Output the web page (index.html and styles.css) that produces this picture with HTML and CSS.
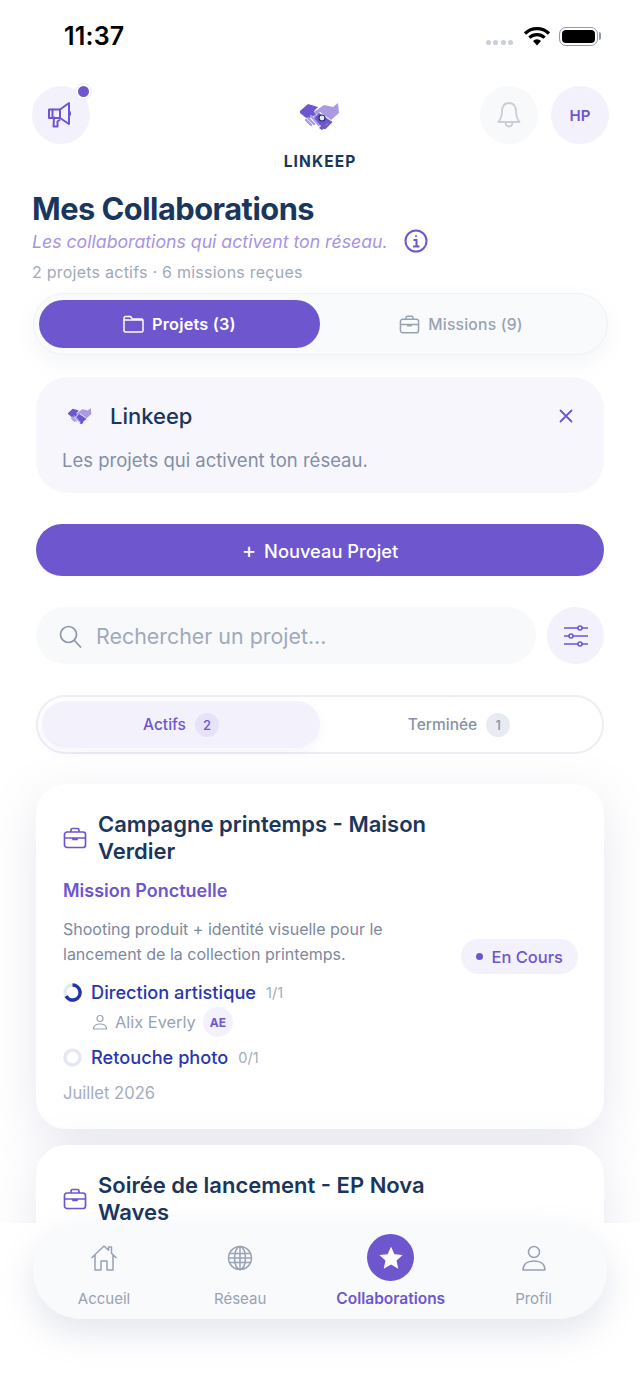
FILE: index.html
```html
<!DOCTYPE html>
<html>
<head>
    <link rel="stylesheet" href="styles.css">
</head>
<body>
<div class="screen">
    <div class="status-bar">
        <span class="time">11:37</span>
        <div class="status-icons">
            <span class="dots"><i></i><i></i><i></i><i></i></span>
            <svg width="26" height="20" viewBox="0 0 26 20"><path d="M1 7.500a17 17 0 0 1 24 0" fill="none" stroke="#000" stroke-width="3.200"/><path d="M5.400 11.600a11 11 0 0 1 15.200 0" fill="none" stroke="#000" stroke-width="3.200"/><path d="M9 15a5.600 5.600 0 0 1 8 0l-4 4.400z" fill="#000"/></svg>
            <span class="battery"><b></b></span>
        </div>
    </div>

    <header class="top">
        <div class="round-btn lilac has-dot">
            <svg width="30" height="30" viewBox="0 0 30 30" fill="none" stroke="#6e56cf" stroke-width="2" stroke-linejoin="round" stroke-linecap="round"><path d="M3 9.500h11l9-6.500v21l-9-6H3z"/><path d="M6.500 9.500v8M14 9.500v8"/><path d="M8 17.500l-.5 9h4v-5l2-1.500"/><path d="M23 11.500c1.500.5 1.500 3.500 0 4"/></svg>
            <span class="dot"></span>
        </div>
        <div class="brand">
            <svg width="40" height="28" viewBox="0 0 40 28">
                <path d="M0 8l8-7 10 3-4 4 2 4-5 2-3 2-3-2-5-4z" fill="#6e56cf"/>
                <path d="M14 9l10-7 9 2 5-4 1 10-8 7-11-8-3 3z" fill="#a99ae3"/>
                <path d="M8 15l6 6M11 13l8 9M6 17l5 5M15 13l8 10" stroke="#a99ae3" stroke-width="2.400" stroke-linecap="round"/>
                <path d="M19 10l12 8-5 4-1 3-3 2-3-2 2-2-7-8 3-3z" fill="#6e56cf"/>
                <path d="M25 25l4-4M28 22l3-3" stroke="#6e56cf" stroke-width="2.400" stroke-linecap="round"/>
                <circle cx="22" cy="15" r="3" fill="#e8e6f5" stroke="#1e3560" stroke-width="1.200"/>
            </svg>
            <span class="brand-name">LINKEEP</span>
        </div>
        <div class="top-right">
            <div class="round-btn pale">
                <svg width="28" height="30" viewBox="0 0 28 30" fill="none" stroke="#c8cdd6" stroke-width="1.800" stroke-linejoin="round"><path d="M14 3c-5 0-7 4-7 8 0 6-1 8-3.500 11h21c-2.500-3-3.500-5-3.500-11 0-4-2-8-7-8z"/><path d="M10.500 22c0 6 7 6 7 0"/></svg>
            </div>
            <div class="round-btn lilac initials">HP</div>
        </div>
    </header>

    <section class="intro">
        <h1>Mes Collaborations</h1>
        <div class="tagline">
            <em>Les collaborations qui activent ton réseau.</em>
            <svg width="24" height="24" viewBox="0 0 24 24" fill="none" stroke="#6e56cf" stroke-width="2"><circle cx="12" cy="12" r="10.500"/><path d="M9.500 11h3v6.500M9 17.500h6.500"/><circle cx="12" cy="7" r="1" fill="#6e56cf" stroke="none"/></svg>
        </div>
        <p class="stats">2 projets actifs · 6 missions reçues</p>
    </section>

    <nav class="main-tabs">
        <div class="main-tab active">
            <svg width="21" height="18" viewBox="0 0 21 18" fill="none" stroke="#fff" stroke-width="1.500" stroke-linejoin="round"><path d="M1 3a1.500 1.500 0 0 1 1.500-1.500h5L9.500 4H18.500A1.500 1.500 0 0 1 20 5.500v10a1.500 1.500 0 0 1-1.500 1.500h-16A1.500 1.500 0 0 1 1 15.500z"/><path d="M1 5h19"/></svg>
            Projets (3)
        </div>
        <div class="main-tab">
            <svg width="21" height="19" viewBox="0 0 24 22" fill="none" stroke="#98a2b5" stroke-width="1.700" stroke-linejoin="round"><rect x="1.500" y="5" width="21" height="15.500" rx="2.500"/><path d="M8 5V3a1.500 1.500 0 0 1 1.500-1.500h5A1.500 1.500 0 0 1 16 3v2M1.500 11h21M10 11v1.500h4V11"/></svg>
            Missions (9)
        </div>
    </nav>

    <section class="banner">
        <div class="banner-head">
            <svg width="24" height="17" viewBox="0 0 40 28">
                <path d="M0 8l8-7 10 3-4 4 2 4-5 2-3 2-3-2-5-4z" fill="#6e56cf"/>
                <path d="M14 9l10-7 9 2 5-4 1 10-8 7-11-8-3 3z" fill="#a99ae3"/>
                <path d="M8 15l6 6M11 13l8 9M6 17l5 5M15 13l8 10" stroke="#a99ae3" stroke-width="2.400" stroke-linecap="round"/>
                <path d="M19 10l12 8-5 4-1 3-3 2-3-2 2-2-7-8 3-3z" fill="#6e56cf"/>
            </svg>
            <span class="banner-title">Linkeep</span>
            <svg class="close" width="14" height="14" viewBox="0 0 14 14" stroke="#6e56cf" stroke-width="1.800" stroke-linecap="round"><path d="M1.500 1.500l11 11M12.500 1.500l-11 11"/></svg>
        </div>
        <p>Les projets qui activent ton réseau.</p>
    </section>

    <button class="new-btn"><span class="plus">+</span> Nouveau Projet</button>

    <div class="search-row">
        <div class="search">
            <svg width="24" height="24" viewBox="0 0 24 24" fill="none" stroke="#8c97ab" stroke-width="1.700" stroke-linecap="round"><circle cx="10.500" cy="10.500" r="8"/><path d="M16.500 16.500l6 6.500"/></svg>
            <span>Rechercher un projet...</span>
        </div>
        <div class="round-btn lilac filter">
            <svg width="24" height="22" viewBox="0 0 24 22" fill="none" stroke="#6e56cf" stroke-width="1.600"><path d="M0 3h24M0 11h24M0 19h24"/><circle cx="16" cy="3" r="2" fill="#f3f1fb"/><circle cx="7" cy="11" r="2" fill="#f3f1fb"/><circle cx="16" cy="19" r="2" fill="#f3f1fb"/></svg>
        </div>
    </div>

    <div class="segment">
        <div class="segment-item active">Actifs <span class="count">2</span></div>
        <div class="segment-item">Terminée <span class="count">1</span></div>
    </div>

    <article class="card">
        <div class="card-head">
            <svg width="24" height="22" viewBox="0 0 24 22" fill="none" stroke="#6e56cf" stroke-width="1.700" stroke-linejoin="round"><rect x="1.500" y="5" width="21" height="15.500" rx="2.500"/><path d="M8 5V3a1.500 1.500 0 0 1 1.500-1.500h5A1.500 1.500 0 0 1 16 3v2M1.500 11h21M10 11v1.500h4V11"/></svg>
            <h2>Campagne printemps - Maison Verdier</h2>
        </div>
        <div class="card-type">Mission Ponctuelle</div>
        <div class="card-desc">
            <p>Shooting produit + identité visuelle pour le lancement de la collection printemps.</p>
            <span class="badge"><i></i>En Cours</span>
        </div>
        <div class="task">
            <svg width="19" height="19" viewBox="0 0 19 19" fill="none" stroke-width="3.500"><circle cx="9.500" cy="9.500" r="7.500" stroke="#e6e8f1"/><path d="M9.500 2A7.500 7.500 0 1 1 3 13.200" stroke="#2433ab"/></svg>
            <span class="task-name">Direction artistique</span>
            <span class="task-count">1/1</span>
        </div>
        <div class="assignee">
            <svg width="16" height="16" viewBox="0 0 16 16" fill="none" stroke="#98a2b5" stroke-width="1.200"><circle cx="8" cy="4.500" r="3"/><path d="M1.500 15c0-3 2-5 6.500-5s6.500 2 6.500 5z" stroke-linejoin="round"/></svg>
            <span class="assignee-name">Alix Everly</span>
            <span class="avatar">AE</span>
        </div>
        <div class="task second">
            <svg width="19" height="19" viewBox="0 0 19 19" fill="none" stroke-width="3.500"><circle cx="9.500" cy="9.500" r="7.500" stroke="#e6e8f1"/></svg>
            <span class="task-name">Retouche photo</span>
            <span class="task-count">0/1</span>
        </div>
        <div class="card-date">Juillet 2026</div>
    </article>

    <article class="card next">
        <div class="card-head">
            <svg width="24" height="22" viewBox="0 0 24 22" fill="none" stroke="#6e56cf" stroke-width="1.700" stroke-linejoin="round"><rect x="1.500" y="5" width="21" height="15.500" rx="2.500"/><path d="M8 5V3a1.500 1.500 0 0 1 1.500-1.500h5A1.500 1.500 0 0 1 16 3v2M1.500 11h21M10 11v1.500h4V11"/></svg>
            <h2>Soirée de lancement - EP Nova Waves</h2>
        </div>
    </article>

    <div class="bottom-area">
        <nav class="bottom-nav">
            <div class="nav-item first">
                <svg class="nav-icon" width="28" height="28" viewBox="0 0 28 28" fill="none" stroke="#98a2b5" stroke-width="1.500" stroke-linejoin="round"><path d="M1.500 14L14 2l4.500 4.300V3h3v6.200L26.500 14M5 11v15h6v-9h6v9h6V11"/></svg>
                <span>Accueil</span>
            </div>
            <div class="nav-item">
                <svg class="nav-icon" width="28" height="28" viewBox="0 0 28 28" fill="none" stroke="#98a2b5" stroke-width="1.500"><circle cx="14" cy="14" r="11.500"/><ellipse cx="14" cy="14" rx="5.500" ry="11.500"/><path d="M14 2.500v23M3.500 9.500h21M3.500 18.500h21M2.500 14h23"/></svg>
                <span>Réseau</span>
            </div>
            <div class="nav-item active">
                <span class="star-wrap">
                    <svg width="26" height="26" viewBox="0 0 24 24" fill="#fff"><path d="M12 1.500l3.200 7 7.600.8-5.700 5.100 1.600 7.500L12 18l-6.700 3.900 1.600-7.500L1.200 9.300l7.600-.8z"/></svg>
                </span>
                <span>Collaborations</span>
            </div>
            <div class="nav-item">
                <svg class="nav-icon" width="28" height="28" viewBox="0 0 28 28" fill="none" stroke="#98a2b5" stroke-width="1.500" stroke-linejoin="round"><circle cx="14" cy="8" r="5.500"/><path d="M3 26c0-5.500 4-9 11-9s11 3.500 11 9z"/></svg>
                <span>Profil</span>
            </div>
        </nav>
    </div>
</div>
</body>
</html>
```

FILE: styles.css
```css
* {
    box-sizing: border-box;
}

body {
    margin: 0;
    padding: 0;
    font-family: Inter, "Noto Sans", sans-serif;
    background: #fff;
    color: #1b365d;
}

p, h1, h2 {
    margin: 0;
}

.screen {
    position: relative;
    width: 640px;
    height: 1385px;
    overflow: hidden;
    background: #fff;
}

/* status bar */
.status-bar {
    display: flex;
    justify-content: space-between;
    align-items: center;
    height: 72px;
    padding: 0 42px 0 64px;
}

.time {
    font-size: 25px;
    font-weight: 600;
    color: #000;
    letter-spacing: 0.2px;
}

.status-icons {
    display: flex;
    align-items: center;
    gap: 9px;
}

.dots {
    display: flex;
    gap: 2.500px;
    margin-top: 13px;
    margin-right: 2px;
}

.dots i {
    width: 5px;
    height: 5px;
    border-radius: 50%;
    background: #c9cddc;
}

.battery {
    position: relative;
    width: 39px;
    height: 19px;
    padding: 2px;
    border: 1.500px solid #8d99b3;
    border-radius: 7px;
}

.battery::after {
    content: "";
    position: absolute;
    top: 4px;
    right: -4px;
    width: 2px;
    height: 8px;
    border-radius: 0 2px 2px 0;
    background: #8d99b3;
}

.battery b {
    display: block;
    height: 100%;
    border-radius: 4px;
    background: #000;
}

/* header */
.top {
    position: relative;
    display: flex;
    justify-content: space-between;
    align-items: flex-start;
    height: 106px;
    padding: 14px 31px 0 32px;
}

.round-btn {
    position: relative;
    display: flex;
    align-items: center;
    justify-content: center;
    width: 58px;
    height: 58px;
    border-radius: 50%;
}

.lilac {
    background: #f3f1fb;
}

.pale {
    background: #f8f9fa;
}

.dot {
    position: absolute;
    top: -2px;
    right: -1px;
    width: 15px;
    height: 15px;
    border: 2px solid #fff;
    border-radius: 50%;
    outline: 1px solid #ecebf6;
    background: #6e56cf;
}

.brand {
    position: absolute;
    left: 0;
    right: 0;
    top: 31px;
    display: flex;
    flex-direction: column;
    align-items: center;
}

.brand-name {
    margin-top: 21px;
    font-size: 15.500px;
    font-weight: 700;
    letter-spacing: 1.100px;
    line-height: 20px;
}

.top-right {
    display: flex;
    gap: 13px;
}

.initials {
    font-size: 15px;
    font-weight: 600;
    color: #6e56cf;
}

/* title */
.intro {
    padding: 0 32px;
}

h1 {
    height: 48px;
    font-size: 30.800px;
    font-weight: 700;
    letter-spacing: -0.500px;
    line-height: 62px;
}

.tagline {
    display: flex;
    align-items: center;
    gap: 16px;
    height: 30px;
}

.tagline em {
    font-size: 17.700px;
    color: #a893e3;
}

.stats {
    margin-top: 6px;
    font-size: 16px;
    letter-spacing: 0.240px;
    line-height: 20px;
    color: #a0a9ba;
}

/* main tabs */
.main-tabs {
    display: flex;
    width: 575px;
    height: 62px;
    margin: 11px 0 0 33px;
    padding: 6px 5px;
    border: 1px solid #f0f1f6;
    border-radius: 31px;
    background: #f9fafb;
    box-shadow: 0 8px 20px rgba(120, 130, 170, 0.08);
}

.main-tab {
    flex: 1;
    display: flex;
    align-items: center;
    justify-content: center;
    gap: 8px;
    font-size: 15.700px;
    font-weight: 500;
    letter-spacing: 0.200px;
    color: #98a2b5;
}

.main-tab.active {
    flex: 0 0 281px;
    border-radius: 24px;
    font-size: 16.300px;
    font-weight: 600;
    background: #6e56cf;
    color: #fff;
}

/* banner */
.banner {
    height: 116px;
    margin: 22px 36px 0;
    padding: 26px 30px 0 26px;
    border-radius: 32px;
    background: #f6f6fc;
}

.banner-head {
    display: flex;
    align-items: center;
    height: 26px;
    padding-left: 6px;
}

.banner-title {
    margin-left: 18px;
    font-size: 22px;
    font-weight: 500;
}

.close {
    margin-left: auto;
    margin-right: 1px;
}

.banner p {
    margin-top: 20px;
    font-size: 18.500px;
    line-height: 22px;
    color: #848fa5;
}

/* new project */
.new-btn {
    display: block;
    width: 568px;
    height: 52px;
    margin: 31px 0 0 36px;
    border: none;
    border-radius: 26px;
    font-family: inherit;
    font-size: 18.300px;
    font-weight: 500;
    background: #6e56cf;
    color: #fff;
}

.plus {
    margin-right: 3px;
    font-size: 22px;
    font-weight: 400;
    line-height: 1;
}

/* search */
.search-row {
    display: flex;
    gap: 11px;
    margin: 31px 36px 0;
}

.search {
    flex: 1;
    display: flex;
    align-items: center;
    gap: 14px;
    height: 57px;
    padding-left: 22px;
    border-radius: 29px;
    font-size: 21.400px;
    line-height: 24px;
    color: #a0aabb;
    background: #f8f9fa;
}

.filter {
    width: 57px;
    height: 57px;
}

/* status filter */
.segment {
    display: flex;
    height: 59px;
    margin: 31px 36px 0;
    padding: 4px;
    border: 2px solid #eceef4;
    border-radius: 30px;
    background: #fff;
}

.segment-item {
    flex: 1;
    display: flex;
    align-items: center;
    justify-content: center;
    gap: 9px;
    font-size: 15.500px;
    font-weight: 500;
    color: #8792a6;
}

.segment-item.active {
    flex: 0 0 278px;
    border-radius: 25px;
    color: #6e56cf;
    background: #f3f1fb;
    box-shadow: 0 4px 12px rgba(110, 86, 207, 0.06);
}

.count {
    display: flex;
    align-items: center;
    justify-content: center;
    width: 24px;
    height: 24px;
    border-radius: 50%;
    font-size: 13px;
    background: #e8ebf1;
}

.active .count {
    background: #e6e2f7;
}

/* cards */
.card {
    position: relative;
    height: 345px;
    margin: 30px 36px 0;
    padding: 27px 26px 0 27px;
    border-radius: 30px;
    background: #fff;
    box-shadow: 0 14px 50px rgba(120, 130, 170, 0.18);
}

.card.next {
    margin-top: 16px;
    height: 200px;
}

.card-head {
    display: flex;
    align-items: center;
    gap: 11px;
}

.card-head h2 {
    width: 350px;
    font-size: 22px;
    font-weight: 600;
    line-height: 27px;
}

.card-type {
    margin-top: 15px;
    font-size: 18px;
    font-weight: 600;
    line-height: 22px;
    color: #6e56cf;
}

.card-desc {
    display: flex;
    justify-content: space-between;
    align-items: flex-end;
    margin-top: 15px;
}

.card-desc p {
    width: 350px;
    margin-bottom: 7px;
    font-size: 16px;
    line-height: 25px;
    color: #7d889d;
}

.badge {
    display: flex;
    align-items: center;
    gap: 8px;
    height: 35px;
    padding: 0 15px;
    border-radius: 18px;
    font-size: 16.500px;
    font-weight: 500;
    color: #6e56cf;
    background: #f3f1fb;
}

.badge i {
    width: 7px;
    height: 7px;
    border-radius: 50%;
    background: #6e56cf;
}

.task {
    display: flex;
    align-items: center;
    height: 22px;
    margin-top: 7px;
}

.task.second {
    margin-top: 9px;
}

.task-name {
    margin-left: 9px;
    font-size: 18.200px;
    font-weight: 500;
    color: #2a35b0;
}

.task-count {
    margin-left: 10px;
    font-size: 14.500px;
    color: #a3abbc;
}

.assignee {
    display: flex;
    align-items: center;
    height: 30px;
    margin-top: 4px;
    padding-left: 29px;
}

.assignee-name {
    margin-left: 7px;
    font-size: 16.400px;
    color: #98a2b5;
}

.avatar {
    display: flex;
    align-items: center;
    justify-content: center;
    width: 30px;
    height: 30px;
    margin-left: 7px;
    border-radius: 50%;
    font-size: 12px;
    font-weight: 700;
    color: #6e56cf;
    background: #f3f1fb;
}

.card-date {
    margin-top: 15px;
    font-size: 16.600px;
    line-height: 20px;
    color: #a5adbe;
}

/* bottom nav */
.bottom-area {
    position: absolute;
    left: 0;
    right: 0;
    bottom: 0;
    height: 162px;
    background: #fff;
}

.bottom-nav {
    display: flex;
    gap: 70px;
    width: 574px;
    height: 96px;
    margin-left: 33px;
    padding: 11px 0 0 31px;
    border-radius: 48px;
    background: #f9fafc;
    box-shadow: 0 14px 34px rgba(120, 130, 170, 0.2);
}

.nav-item {
    display: flex;
    flex-direction: column;
    align-items: center;
    font-size: 15px;
    line-height: 18px;
    color: #98a2b5;
}

.nav-item.first {
    width: 80px;
}

.nav-item .nav-icon {
    margin: 10px 0 18px;
}

.nav-item.active {
    font-size: 15.500px;
    font-weight: 600;
    color: #6e56cf;
}

.star-wrap {
    display: flex;
    align-items: center;
    justify-content: center;
    width: 47px;
    height: 47px;
    margin-bottom: 9px;
    border-radius: 50%;
    background: #6e56cf;
}
```
